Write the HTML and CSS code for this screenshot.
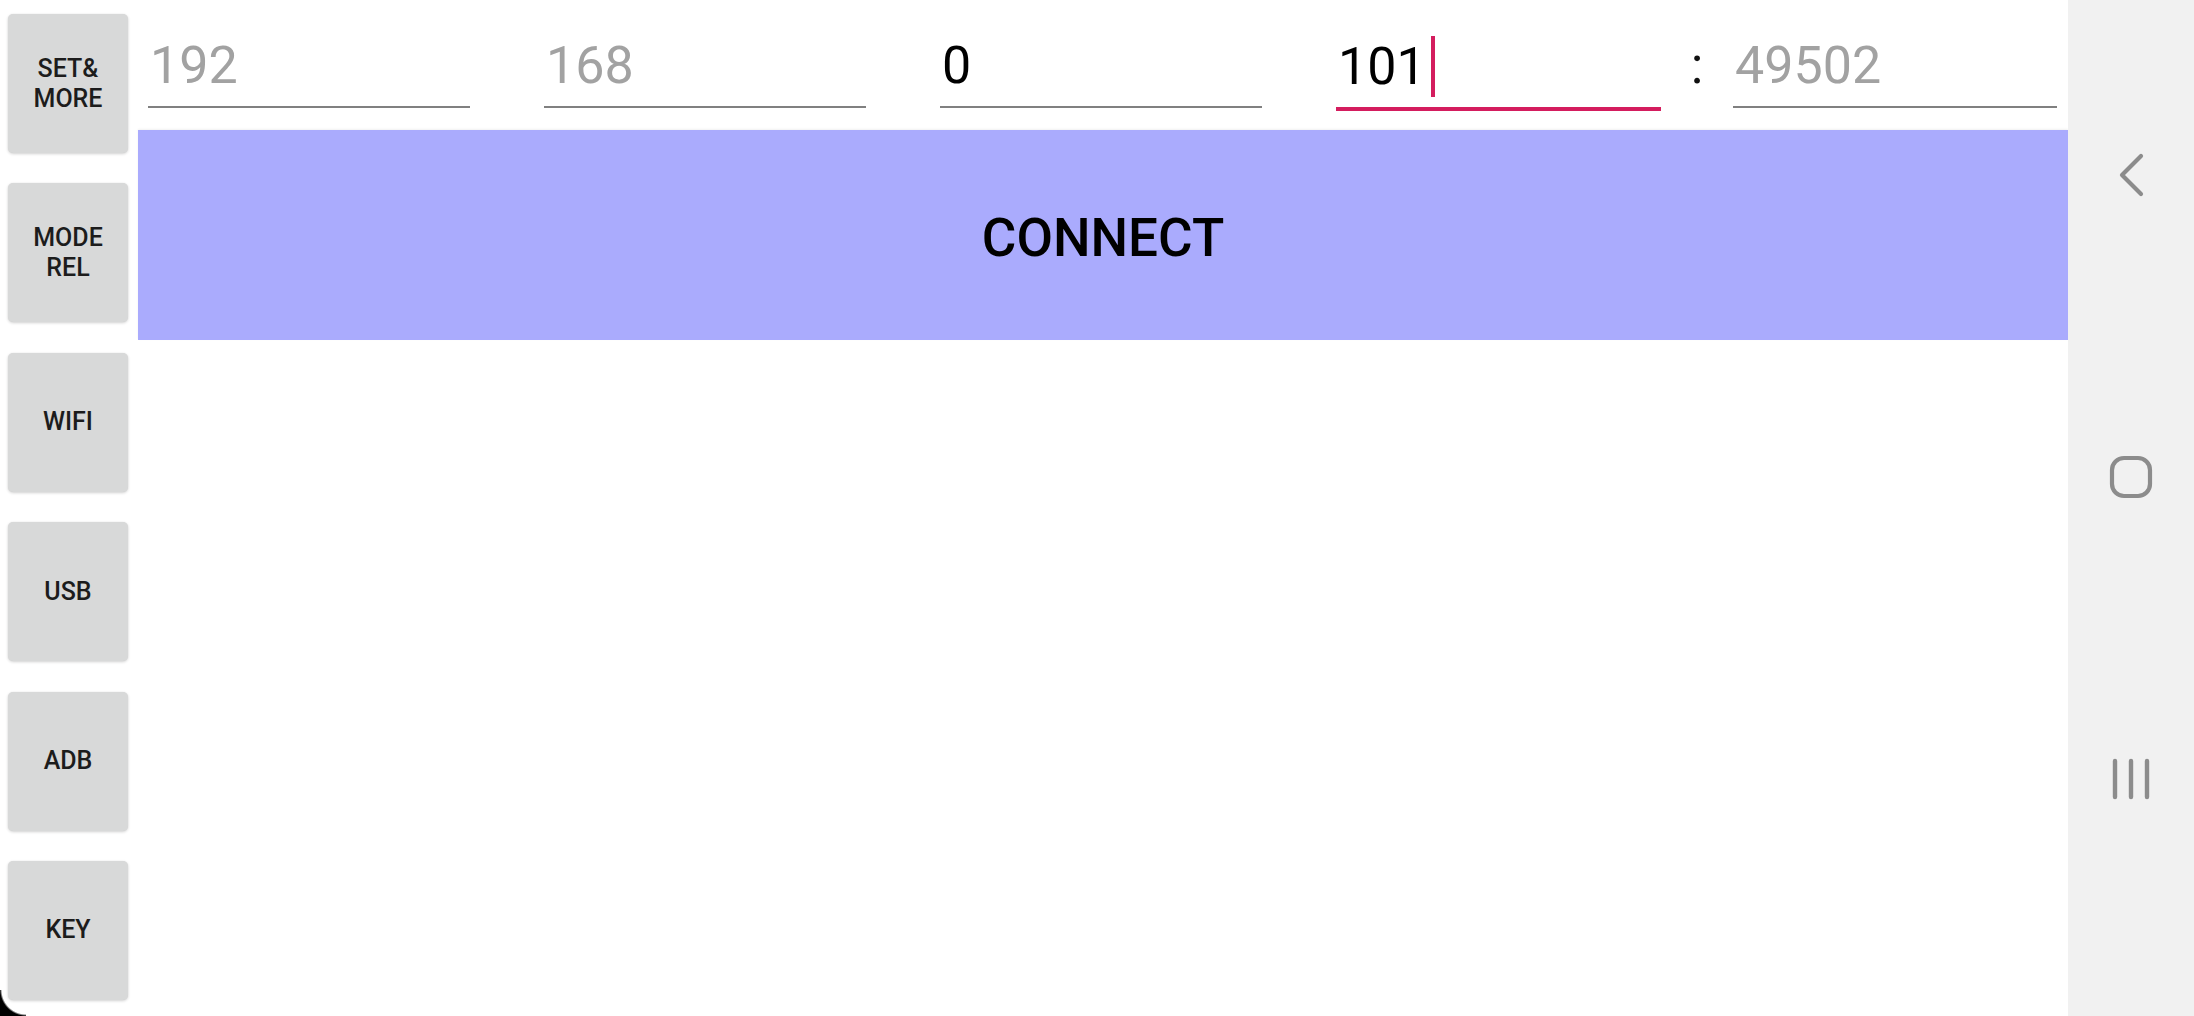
FILE: index.html
```html
<!DOCTYPE html>
<html>
<head>
<meta charset="utf-8">
<link rel="stylesheet" href="styles.css">
</head>
<body>
<div class="screen">
  <div class="app">
    <div class="side">
      <div class="sbtn">SET&amp;<br>MORE</div>
      <div class="sbtn">MODE<br>REL</div>
      <div class="sbtn">WIFI</div>
      <div class="sbtn">USB</div>
      <div class="sbtn">ADB</div>
      <div class="sbtn">KEY</div>
    </div>
    <div class="content">
      <div class="fields">
        <div class="field gap"><span class="hint">192</span></div>
        <div class="field gap"><span class="hint">168</span></div>
        <div class="field gap"><span class="val">0</span></div>
        <div class="field focus"><span class="val">101</span><span class="caret"></span></div>
        <div class="colon">:</div>
        <div class="field last"><span class="hint">49502</span></div>
      </div>
      <div class="connect">CONNECT</div>
    </div>
  </div>
  <div class="nav">
    <svg class="navicon" width="40" height="48" viewBox="0 0 40 48">
      <polyline points="30,5 11,24 30,43" fill="none" stroke="#8c8c8c" stroke-width="4.2" stroke-linecap="round" stroke-linejoin="round"/>
    </svg>
    <svg class="navicon" width="48" height="48" viewBox="0 0 48 48">
      <rect x="5" y="5" width="38" height="38" rx="12" ry="12" fill="none" stroke="#8c8c8c" stroke-width="4.2"/>
    </svg>
    <svg class="navicon" width="48" height="48" viewBox="0 0 48 48">
      <line x1="8" y1="6" x2="8" y2="42" stroke="#8c8c8c" stroke-width="4.4" stroke-linecap="round"/>
      <line x1="24" y1="6" x2="24" y2="42" stroke="#8c8c8c" stroke-width="4.4" stroke-linecap="round"/>
      <line x1="40" y1="6" x2="40" y2="42" stroke="#8c8c8c" stroke-width="4.4" stroke-linecap="round"/>
    </svg>
  </div>
  <div class="corner"></div>
</div>
</body>
</html>
```

FILE: styles.css
```css
html, body {
  margin: 0;
  padding: 0;
}
body {
  width: 2194px;
  height: 1016px;
  overflow: hidden;
  background: #ffffff;
  font-family: Roboto, "Liberation Sans", sans-serif;
}
.screen {
  position: relative;
  display: flex;
  width: 2194px;
  height: 1016px;
}
.app {
  display: flex;
  width: 2068px;
  height: 1016px;
  background: #ffffff;
}
.side {
  width: 138px;
  box-sizing: border-box;
  padding: 14px 10px 0 8px;
  display: flex;
  flex-direction: column;
  gap: 30.4px;
}
.sbtn {
  width: 120px;
  height: 139px;
  flex: none;
  background: #d8d9d9;
  border-radius: 5px;
  box-shadow: 0 1px 3px rgba(0, 0, 0, 0.18), 0 0 1px rgba(0, 0, 0, 0.08);
  display: flex;
  align-items: center;
  justify-content: center;
  text-align: center;
  font-size: 25px;
  line-height: 30px;
  font-weight: 500;
  color: #1c1c1c;
}
.content {
  flex: 1;
  display: flex;
  flex-direction: column;
}
.fields {
  height: 130px;
  box-sizing: border-box;
  padding: 0 11px 0 10px;
  display: flex;
  align-items: flex-start;
}
.field {
  width: 322px;
  flex: none;
  box-sizing: border-box;
  padding: 35px 0 10px 2px;
  font-size: 52px;
  line-height: 61px;
  height: 108px;
  border-bottom: 2px solid #808080;
  white-space: nowrap;
}
.field.gap {
  margin-right: 74px;
}
.field.focus {
  width: 325px;
  height: 111px;
  padding-bottom: 11px;
  border-bottom: 4px solid #d41d5e;
  padding-top: 36px;
}
.field.last {
  width: 324px;
}
.hint {
  color: #a2a2a2;
}
.val {
  color: #000000;
}
.caret {
  display: inline-block;
  width: 4px;
  height: 61px;
  margin-left: 5px;
  background: #d41d5e;
  vertical-align: -13px;
}
.colon {
  width: 72px;
  flex: none;
  text-align: center;
  padding-top: 35px;
  font-size: 52px;
  line-height: 61px;
  color: #111111;
}
.connect {
  height: 210px;
  box-sizing: border-box;
  padding-top: 6px;
  background: #aaabfd;
  display: flex;
  align-items: center;
  justify-content: center;
  font-size: 53px;
  font-weight: 500;
  color: #000000;
  box-shadow: 0 -1px 2px rgba(0, 0, 0, 0.06);
}
.nav {
  width: 126px;
  height: 1016px;
  background: #f1f1f1;
  display: flex;
  flex-direction: column;
  align-items: center;
  padding-top: 151px;
  box-sizing: border-box;
  gap: 254px;
}
.navicon {
  display: block;
  flex: none;
}
.corner {
  position: absolute;
  left: 0;
  bottom: 0;
  width: 26px;
  height: 26px;
  background: radial-gradient(circle at 100% 0, rgba(0,0,0,0) 24px, #000 26px);
}
```
